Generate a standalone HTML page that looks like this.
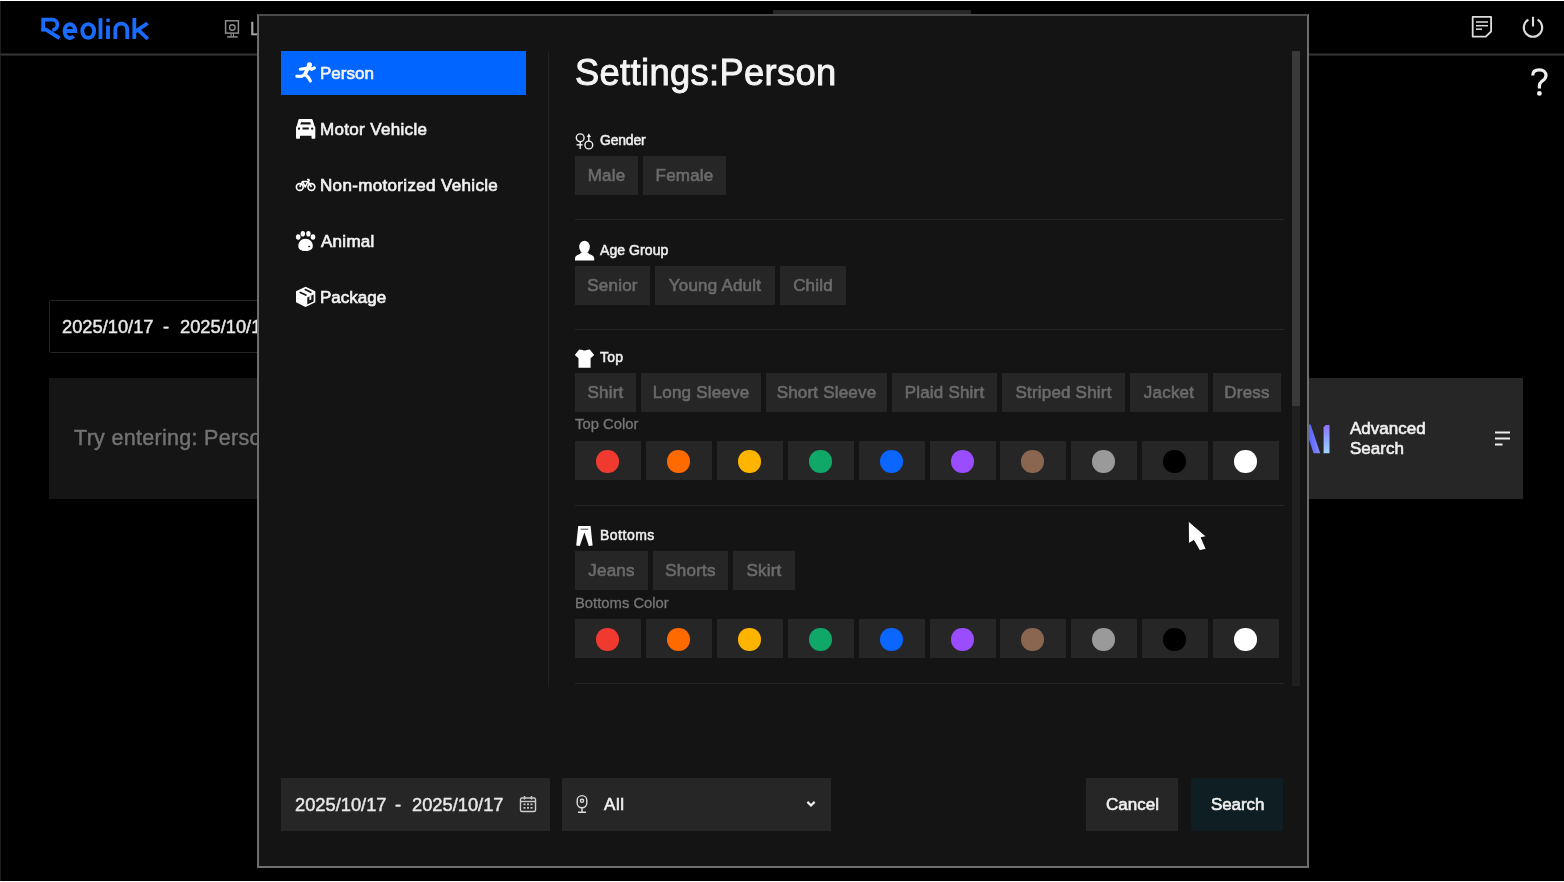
<!DOCTYPE html>
<html><head><meta charset="utf-8">
<style>
*{margin:0;padding:0;box-sizing:border-box}
html,body{width:1564px;height:882px;overflow:hidden;background:#000;font-family:"Liberation Sans",sans-serif}
.a{position:absolute;white-space:nowrap;will-change:transform}
.t{line-height:1}
#topw{left:0;top:0;width:1564px;height:1px;background:#fff}
#botw{left:0;top:881px;width:1564px;height:1px;background:#fff}
#leftg{left:0;top:1px;width:1px;height:880px;background:#1e1e1e}
#hdrline{left:0;top:53px;width:1564px;height:3px;background:linear-gradient(#1c1c1c 0 1px,#323232 1px 2px,#1e1e1e 2px 3px)}
.logo{left:40px;top:14px;color:#1a6dff;font-size:30px;font-weight:bold}
#bgdate{left:49px;top:300px;width:260px;height:53px;border:1px solid #232323;border-radius:2px}
#bgsearch{left:49px;top:378px;width:1300px;height:121px;background:#151515}
#adv{left:1300px;top:378px;width:223px;height:121px;background:#262626}
#modal{left:257px;top:14px;width:1052px;height:854px;background:#141414;border:2px solid #6e6e6e;border-top:2px solid #4a4a4a}
.menu{left:281px;width:245px;height:44px}
.menu.sel{background:#0066ff}
.mt{left:320px;color:#f2f2f2;font-size:17px;font-weight:normal;-webkit-text-stroke:0.65px #f2f2f2}
.mi{left:290px}
#vdiv{left:548px;top:51px;width:1px;height:636px;background:#222}
#title{left:575.3px;top:54.8px;color:#f5f5f5;font-size:36.3px;letter-spacing:0.35px;-webkit-text-stroke:0.9px #f5f5f5}
.lbl{left:599.5px;color:#f0f0f0;font-size:14px;-webkit-text-stroke:0.5px #f0f0f0}
.sub{left:575px;color:#777;font-size:14.8px;-webkit-text-stroke:0.3px #777}
.chip{height:39px;background:#262626;color:#6b6b6b;font-size:17px;line-height:39px;text-align:center;letter-spacing:0.2px;-webkit-text-stroke:0.6px #6b6b6b}
.hr{left:575px;width:709px;height:1px;background:#252525}
.sw{width:66px;height:39px;background:#262626}
.sw i{position:absolute;left:21px;top:9.3px;width:22.5px;height:22.5px;border-radius:50%}
#track{left:1292px;top:51px;width:8px;height:635px;background:#1f1f1f}
#thumb{left:1292px;top:51px;width:8px;height:355px;background:#3a3a3a}
.btmbox{top:778px;height:53px;background:#262626}
.btn{top:778px;height:53px;width:92px}
.bt{color:#f0f0f0;font-size:17px;-webkit-text-stroke:0.6px #f0f0f0}
.ds{color:#e8e8e8;font-size:18.3px;-webkit-text-stroke:0.45px #e8e8e8}
</style></head><body>
<div class="a" id="topw"></div>
<div class="a" id="botw"></div>
<div class="a" id="leftg"></div>
<div class="a" id="hdrline"></div>
<svg class="a" style="left:36px;top:12px" width="120" height="34" viewBox="0 0 120 34"><g fill="none" stroke="#1a6cff" stroke-width="3.8"><path d="M7.2 19.2 V7.6 H16.3 A5.1 5.1 0 0 1 16.3 17.8"/><path d="M5.4 17.6 H10 L23.5 26.2"/><path d="M28.6 19 H39.4 A5.45 6.9 0 1 0 37.6 24.3"/><ellipse cx="52.2" cy="19" rx="5.95" ry="6.95"/><path d="M64.5 6.2 V27"/><path d="M72 13.5 V27"/><path d="M79.35 27 V17.6 A5.95 5.95 0 0 1 91.25 17.6 V27"/><path d="M98.3 6 V27"/><path d="M98.3 20.2 L111.6 11.2"/><path d="M102.2 17.8 L111.8 27"/></g><rect x="70.3" y="6.4" width="3.5" height="3.6" rx="1" fill="#1a6cff"/></svg>
<!-- camera icon header -->
<svg class="a" style="left:224px;top:19px" width="18" height="20" viewBox="0 0 18 20"><g stroke="#8e8e8e" fill="none"><rect x="1.6" y="1.8" width="12.8" height="12.3" stroke-width="1.5"/><circle cx="8.3" cy="8.5" r="2.8" stroke-width="1.4"/><path d="M7.1 14.6 V17.4 M9.5 14.6 V17.4" stroke-width="1.1"/><path d="M3 17.9 H13.6" stroke-width="1.5"/></g></svg>
<div class="a t" style="left:249.6px;top:21px;color:#a8a8a8;font-size:17.5px;-webkit-text-stroke:0.4px #a8a8a8">L</div>
<!-- notes icon -->
<svg class="a" style="left:1470px;top:15px" width="24" height="24" viewBox="0 0 24 24"><path d="M2.7 1.9 H21.1 V16.5 L15.8 21.7 H2.7 Z" fill="none" stroke="#dcdcdc" stroke-width="1.8" stroke-linejoin="round"/><line x1="6" y1="7" x2="18" y2="7" stroke="#dcdcdc" stroke-width="1.5"/><line x1="6" y1="10.7" x2="18" y2="10.7" stroke="#dcdcdc" stroke-width="1.5"/><line x1="6" y1="14.2" x2="12" y2="14.2" stroke="#dcdcdc" stroke-width="1.5"/></svg>
<!-- power icon -->
<svg class="a" style="left:1520px;top:14px" width="26" height="26" viewBox="0 0 26 26"><path d="M8.4 5.6 A9.2 9.2 0 1 0 17.6 5.6" fill="none" stroke="#dcdcdc" stroke-width="2.1"/><line x1="13" y1="2.8" x2="13" y2="12.5" stroke="#dcdcdc" stroke-width="2.1"/></svg>
<svg class="a" style="left:1520px;top:60px" width="40" height="40" viewBox="1520 60 40 40"><path d="M1532.7 75.6 C1532.7 71.5 1535.6 69.9 1539.4 69.9 C1543.3 69.9 1546 72.2 1546 75.5 C1546 78.7 1543.6 80 1541.6 81.5 C1539.9 82.8 1539.4 84 1539.4 86 V88.4" fill="none" stroke="#f0f0f0" stroke-width="3.2"/><circle cx="1539.4" cy="93.4" r="2.4" fill="#f0f0f0"/></svg>

<div class="a" id="bgdate"></div>
<div class="a t ds" style="left:62.4px;top:317.5px">2025/10/17</div><div class="a t ds" style="left:163.4px;top:317.5px">-</div><div class="a t ds" style="left:179.8px;top:317.5px">2025/10/17</div>
<div class="a" id="bgsearch"></div>
<div class="a" id="adv"></div>
<div class="a t" style="left:74px;top:428.4px;color:#727272;font-size:21.5px;letter-spacing:0.3px;-webkit-text-stroke:0.45px #727272">Try entering: Person</div>
<div class="a" style="left:1349.7px;top:418.5px;color:#f0f0f0;font-size:17px;-webkit-text-stroke:0.6px #f0f0f0;line-height:19.5px">Advanced<br>Search</div>
<svg class="a" style="left:1494px;top:430px" width="18" height="17" viewBox="0 0 18 17"><rect x="1" y="1.5" width="15" height="2" fill="#eee"/><rect x="1" y="7.5" width="15" height="2" fill="#eee"/><rect x="1" y="13.5" width="7.5" height="2" fill="#eee"/></svg>
<svg class="a" style="left:1300px;top:420px" width="36" height="36" viewBox="0 0 36 36"><defs><linearGradient id="g1" x1="0" y1="0" x2="1" y2="0"><stop offset="0" stop-color="#3a52ff"/><stop offset="1" stop-color="#8a8cff"/></linearGradient><linearGradient id="g2" x1="0" y1="0" x2="0" y2="1"><stop offset="0" stop-color="#8a70ff"/><stop offset="1" stop-color="#9ad8ff"/></linearGradient></defs><path d="M4 4.6 L10.6 4.6 L20.2 33.3 L13.6 33.3 Z" fill="url(#g1)"/><path d="M23.6 7.2 L25.8 5 L29.5 5 V33.3 H23.6 Z" fill="url(#g2)"/></svg>

<div class="a" id="modal"></div>
<div class="a" style="left:773px;top:10px;width:198px;height:4px;background:#262626"></div>

<div class="a menu sel" style="top:51px"></div>
<div class="a mt t" style="top:65px">Person</div>
<div class="a mt t" style="top:121px;letter-spacing:0.33px">Motor Vehicle</div>
<div class="a mt t" style="top:177px;letter-spacing:0.34px">Non-motorized Vehicle</div>
<div class="a mt t" style="top:233px;left:321px;letter-spacing:0.28px">Animal</div>
<div class="a mt t" style="top:289px">Package</div>
<!-- menu icons (30x30 boxes with origin at 290, y) -->
<svg class="a mi" style="top:58px" width="30" height="30" viewBox="0 0 30 30"><g stroke="#fff" stroke-width="3.1" stroke-linecap="round" stroke-linejoin="round" fill="none"><path d="M19 7.8 L14.8 16.6" stroke-width="3.7"/><path d="M18 10 L10.3 11.3"/><path d="M19.3 10.2 L21.6 11.4 L24.4 9.8"/><path d="M14.8 16.5 L11.5 18.4 L6.8 18.2"/><path d="M15.3 16.6 L18.3 19.4 L20.4 23"/></g><circle cx="19.4" cy="6.8" r="2.6" fill="#fff"/></svg>
<svg class="a mi" style="top:114px" width="30" height="30" viewBox="0 0 30 30"><path fill="#fff" fill-rule="evenodd" d="M9.2 5 H21.6 Q22.4 5 22.7 6 L24.5 12 Q25.3 12.5 25.3 13.5 V24 Q25.3 24.8 24.5 24.8 H22.2 Q21.5 24.8 21.5 24 V21.8 H10 V24 Q10 24.8 9.2 24.8 H6.8 Q6 24.8 6 24 V13.5 Q6 12.5 6.8 12 L8.4 6 Q8.6 5 9.2 5 Z M11 8.3 H20 Q20.3 8.3 20.4 8.7 L21 10.6 H10.3 L10.8 8.7 Q10.9 8.3 11 8.3 Z M9 13.4 A1.2 1.2 0 1 0 9 15.8 A1.2 1.2 0 1 0 9 13.4 Z M22.2 13.4 A1.2 1.2 0 1 0 22.2 15.8 A1.2 1.2 0 1 0 22.2 13.4 Z M12.5 13.6 H18.8 V15.6 H12.5 Z"/></svg>
<svg class="a mi" style="top:170px" width="30" height="30" viewBox="0 0 30 30"><g stroke="#fff" stroke-width="1.6" fill="none" stroke-linejoin="round"><circle cx="9.8" cy="17" r="3.4"/><circle cx="21.4" cy="17" r="3.4"/><path d="M9.8 17 L12.5 11.5 L18 11.5 L21.4 17"/><path d="M12.5 11.5 L15.2 17 L18 11.5"/><path d="M17 9.5 L18.8 9.5 L19.2 11.5"/></g></svg>
<svg class="a mi" style="top:226px" width="30" height="30" viewBox="0 0 30 30"><g fill="#fff"><ellipse cx="8.2" cy="11" rx="2.3" ry="2.7"/><ellipse cx="12.8" cy="7.7" rx="2.2" ry="2.8"/><ellipse cx="18.4" cy="7.7" rx="2.2" ry="2.8"/><ellipse cx="23" cy="11" rx="2.3" ry="2.7"/><path d="M15.5 12.8 C20 12.8 22.8 16.3 22.8 20 C22.8 23.5 20 25 15.5 25 C11 25 8.3 23.5 8.3 20 C8.3 16.3 11 12.8 15.5 12.8 Z"/></g><ellipse cx="19.2" cy="20.5" rx="1.1" ry="0.8" fill="#141414"/></svg>
<svg class="a mi" style="top:282px" width="30" height="30" viewBox="0 0 30 30"><path fill="#fff" d="M15.5 4.8 L25.3 9.3 V20.3 L15.5 25 L6 20.3 V9.3 Z"/><g stroke="#141414" stroke-width="1.7" fill="none" stroke-linecap="round"><path d="M10.3 10.4 L15.8 13.1"/><path d="M15.3 7.6 L20.8 10.3"/></g><path d="M17.3 15.6 L23.6 12.6 V19.4 L17.3 22.4 Z" fill="#141414"/><path d="M19.4 14.6 L21.3 13.7 V17.4 L19.4 18.3 Z" fill="#fff"/></svg>
<div class="a" id="vdiv"></div>

<div class="a t" id="title">Settings:Person</div>

<!-- section icons -->
<svg class="a" style="left:572px;top:130px" width="25" height="25" viewBox="0 0 25 25"><g stroke="#eee" stroke-width="1.4" fill="none"><circle cx="8.2" cy="7.8" r="3.9"/><path d="M8.2 11.7 V19"/><path d="M4.6 14.8 H10.6"/><circle cx="16.8" cy="15" r="3.9"/><path d="M16.8 11.1 V4.5"/></g><path d="M16.8 3.6 L14.8 7 H19 Z" fill="#eee"/></svg>
<svg class="a" style="left:572px;top:237px" width="25" height="25" viewBox="0 0 25 25"><g fill="#fff"><ellipse cx="12.5" cy="10" rx="5.3" ry="6.3"/><path d="M9 15.5 H16 L17 17 C20 18 22.2 19 22.2 21.2 V23.4 H3 V21.2 C3 19 5 18 8 17 Z"/></g></svg>
<svg class="a" style="left:572px;top:345px" width="25" height="25" viewBox="0 0 25 25"><path fill="#fff" d="M7.2 4.5 L10.5 4.9 Q12.5 6.3 14.5 4.9 L17.8 4.5 L22.2 10 L18.6 13.2 V22.8 H6.5 V13.2 L2.8 10 Z"/></svg>
<svg class="a" style="left:572px;top:523px" width="25" height="25" viewBox="0 0 25 25"><path fill="#fff" d="M6.2 3 H18.6 L20.6 22.6 L16.8 22.9 L12.4 9.5 L7.8 22.9 L4.2 22.6 Z"/><path d="M8.6 6.2 H16.2" stroke="#3a3a3a" stroke-width="0.9"/></svg>

<div class="a t lbl" style="top:132.7px;letter-spacing:-0.2px">Gender</div>
<div class="a hr" style="top:219px"></div>
<div class="a t lbl" style="top:242.5px;letter-spacing:0.08px">Age Group</div>
<div class="a hr" style="top:329px"></div>
<div class="a t lbl" style="top:350px;letter-spacing:0.2px">Top</div>
<div class="a t sub" style="top:417.4px">Top Color</div>
<div class="a hr" style="top:505px"></div>
<div class="a t lbl" style="top:528px;letter-spacing:0.5px">Bottoms</div>
<div class="a t sub" style="top:595.6px">Bottoms Color</div>
<div class="a hr" style="top:683px"></div>
<div class="a chip" style="left:575px;top:156px;width:63px">Male</div>
<div class="a chip" style="left:643px;top:156px;width:83px">Female</div>
<div class="a chip" style="left:575px;top:266px;width:75px">Senior</div>
<div class="a chip" style="left:655px;top:266px;width:120px">Young Adult</div>
<div class="a chip" style="left:780px;top:266px;width:66px">Child</div>
<div class="a chip" style="left:575px;top:373px;width:61px">Shirt</div>
<div class="a chip" style="left:641px;top:373px;width:120px">Long Sleeve</div>
<div class="a chip" style="left:766px;top:373px;width:121px">Short Sleeve</div>
<div class="a chip" style="left:892px;top:373px;width:105px">Plaid Shirt</div>
<div class="a chip" style="left:1002px;top:373px;width:123px">Striped Shirt</div>
<div class="a chip" style="left:1130px;top:373px;width:78px">Jacket</div>
<div class="a chip" style="left:1213px;top:373px;width:68px">Dress</div>
<div class="a chip" style="left:575px;top:551px;width:73px">Jeans</div>
<div class="a chip" style="left:653px;top:551px;width:75px">Shorts</div>
<div class="a chip" style="left:733px;top:551px;width:62px">Skirt</div>
<div class="a sw" style="left:575.0px;top:441px;width:65.6px"><i style="background:#f03a30"></i></div>
<div class="a sw" style="left:645.9px;top:441px;width:65.6px"><i style="background:#ff6a00"></i></div>
<div class="a sw" style="left:716.8px;top:441px;width:65.6px"><i style="background:#ffb400"></i></div>
<div class="a sw" style="left:787.7px;top:441px;width:65.6px"><i style="background:#10a868"></i></div>
<div class="a sw" style="left:858.6px;top:441px;width:65.6px"><i style="background:#0a66ff"></i></div>
<div class="a sw" style="left:929.5px;top:441px;width:65.6px"><i style="background:#9a4cff"></i></div>
<div class="a sw" style="left:1000.4px;top:441px;width:65.6px"><i style="background:#8a6650"></i></div>
<div class="a sw" style="left:1071.3px;top:441px;width:65.6px"><i style="background:#9a9a9a"></i></div>
<div class="a sw" style="left:1142.2px;top:441px;width:65.6px"><i style="background:#000000"></i></div>
<div class="a sw" style="left:1213.1px;top:441px;width:65.6px"><i style="background:#ffffff"></i></div>
<div class="a sw" style="left:575.0px;top:619px;width:65.6px"><i style="background:#f03a30"></i></div>
<div class="a sw" style="left:645.9px;top:619px;width:65.6px"><i style="background:#ff6a00"></i></div>
<div class="a sw" style="left:716.8px;top:619px;width:65.6px"><i style="background:#ffb400"></i></div>
<div class="a sw" style="left:787.7px;top:619px;width:65.6px"><i style="background:#10a868"></i></div>
<div class="a sw" style="left:858.6px;top:619px;width:65.6px"><i style="background:#0a66ff"></i></div>
<div class="a sw" style="left:929.5px;top:619px;width:65.6px"><i style="background:#9a4cff"></i></div>
<div class="a sw" style="left:1000.4px;top:619px;width:65.6px"><i style="background:#8a6650"></i></div>
<div class="a sw" style="left:1071.3px;top:619px;width:65.6px"><i style="background:#9a9a9a"></i></div>
<div class="a sw" style="left:1142.2px;top:619px;width:65.6px"><i style="background:#000000"></i></div>
<div class="a sw" style="left:1213.1px;top:619px;width:65.6px"><i style="background:#ffffff"></i></div>

<div class="a" id="track"></div>
<div class="a" id="thumb"></div>

<div class="a btmbox" style="left:281px;width:269px"></div>
<div class="a t ds" style="left:294.5px;top:795.5px">2025/10/17</div><div class="a t ds" style="left:395.2px;top:795.5px">-</div><div class="a t ds" style="left:411.6px;top:795.5px">2025/10/17</div>
<svg class="a" style="left:518px;top:794px" width="20" height="20" viewBox="0 0 20 20"><g stroke="#ccc" stroke-width="1.4" fill="none"><rect x="2.5" y="4" width="15" height="13.5" rx="1.5"/><path d="M2.5 7.5 H17.5"/><path d="M6.5 2 V5.5 M13.5 2 V5.5"/></g><g fill="#ccc"><rect x="5.5" y="9.5" width="2" height="1.7"/><rect x="9" y="9.5" width="2" height="1.7"/><rect x="12.5" y="9.5" width="2" height="1.7"/><rect x="5.5" y="13" width="2" height="1.7"/><rect x="9" y="13" width="2" height="1.7"/><rect x="12.5" y="13" width="2" height="1.7"/></g></svg>
<div class="a btmbox" style="left:562px;width:269px"></div>
<svg class="a" style="left:573px;top:794px" width="18" height="20" viewBox="0 0 18 20"><g stroke="#ddd" stroke-width="1.4" fill="none"><rect x="4.2" y="1.6" width="9.6" height="12.2" rx="4.8"/><circle cx="9" cy="6.8" r="1.6"/><path d="M9 13.8 V17.5 M5 18.3 H13"/></g></svg>
<div class="a t bt" style="left:604px;top:796px;letter-spacing:0.6px">All</div>
<svg class="a" style="left:803.5px;top:797.5px" width="14" height="12" viewBox="0 0 14 12"><path d="M3.4 3.9 L7 7.5 L10.6 3.9" stroke="#eee" stroke-width="2.2" fill="none"/></svg>
<div class="a btn" style="left:1086px;background:#262626"></div>
<div class="a t bt" style="left:1105.5px;top:796px">Cancel</div>
<div class="a btn" style="left:1191px;background:#0e1e23"></div>
<div class="a t bt" style="left:1210.5px;top:796px;letter-spacing:-0.1px">Search</div>

<!-- cursor -->
<svg class="a" style="left:1180px;top:515px" width="32" height="42" viewBox="0 0 32 42"><path d="M8.3 6 L8.6 28.6 L13.8 25.4 L19.6 35.6 L26.2 34.2 L21.2 22.6 L26.3 21.6 Z" fill="#fff" stroke="#000" stroke-width="0.8" stroke-linejoin="miter"/></svg>
</body></html>
